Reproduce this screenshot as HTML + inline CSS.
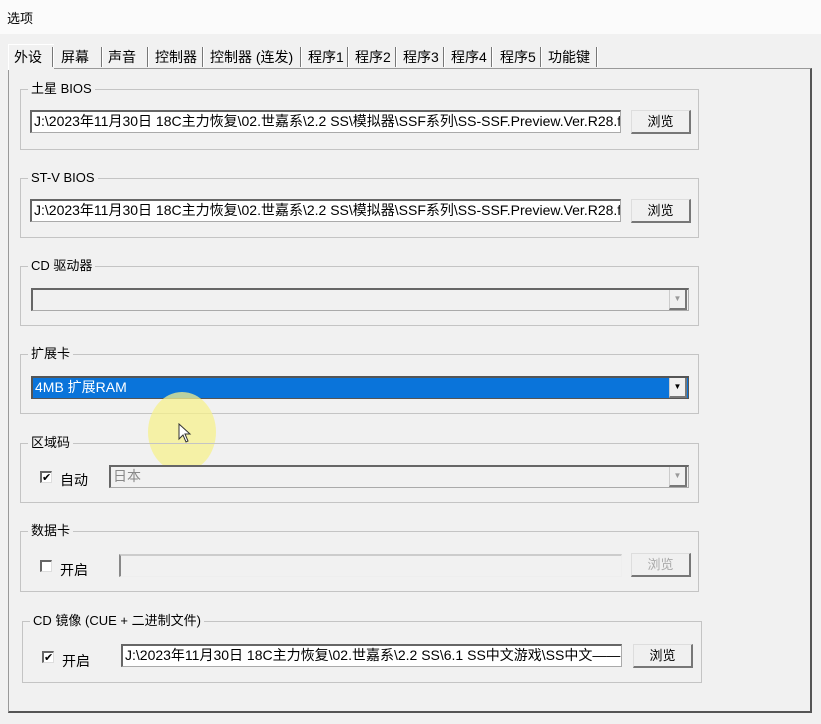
<!DOCTYPE html>
<html><head><meta charset="utf-8"><style>
*{box-sizing:border-box;margin:0;padding:0}
body{width:821px;height:724px;background:#f1f1f1;position:relative;overflow:hidden;font-family:"Liberation Sans","Noto Sans CJK SC",sans-serif;font-size:13px;color:#000}
.a{position:absolute}
.title{left:0;top:0;width:821px;height:34px;background:#fbfbfb}
.panel{left:8px;top:68px;width:804px;height:645px;border:1px solid #999;border-right:2px solid #555;border-bottom:2px solid #555;background:#f1f1f1}
.tab{top:46px;height:23px;line-height:22px;padding-left:4px;white-space:nowrap;font-size:14px}
.sep{top:47px;width:2px;height:20px;background:#777;border-right:1px solid #fff}
.g{border:1px solid #c4c4c4;border-top-color:#c4c4c4}
.gl{background:#f1f1f1;padding:0 3px;line-height:16px}
.inp{background:#fff;border:1px solid #aaa;border-top:2px solid #666;border-left:2px solid #666;line-height:19px;padding-left:2px;white-space:nowrap;overflow:hidden;font-size:14px}
.btn{border:1px solid #ddd;border-right:2px solid #777;border-bottom:2px solid #777;background:#f0f0f0;text-align:center;line-height:21px}
.cb{width:12px;height:12px;border-top:2px solid #666;border-left:2px solid #666;border-right:1px solid #ddd;border-bottom:1px solid #ddd;background:#fff;font-size:11px;line-height:10px;text-align:center}
.dd{width:18px;border-left:1px solid #ccc;border-right:2px solid #777;border-bottom:2px solid #777;background:#f0f0f0;font-size:8px;text-align:center;color:#999}
</style></head><body>
<div class="a title"></div>
<div class="a" style="left:7px;top:8px;">选项</div>
<div class="a panel"></div>
<div class="a" style="left:8px;top:44px;width:46px;height:26px;background:#f1f1f1;border-top:1px solid #fff;border-left:1px solid #fff"></div>
<div class="a tab" style="left:10px">外设</div>
<div class="a sep" style="left:52px"></div><div class="a tab" style="left:57px">屏幕</div>
<div class="a sep" style="left:101px"></div><div class="a tab" style="left:104px">声音</div>
<div class="a sep" style="left:147px"></div><div class="a tab" style="left:151px">控制器</div>
<div class="a sep" style="left:202px"></div><div class="a tab" style="left:206px">控制器 (连发)</div>
<div class="a sep" style="left:300px"></div><div class="a tab" style="left:304px">程序1</div>
<div class="a sep" style="left:347px"></div><div class="a tab" style="left:351px">程序2</div>
<div class="a sep" style="left:395px"></div><div class="a tab" style="left:399px">程序3</div>
<div class="a sep" style="left:443px"></div><div class="a tab" style="left:447px">程序4</div>
<div class="a sep" style="left:491px"></div><div class="a tab" style="left:496px">程序5</div>
<div class="a sep" style="left:540px"></div><div class="a tab" style="left:544px">功能键</div>
<div class="a sep" style="left:596px"></div>

<div class="a g" style="left:20px;top:89px;width:679px;height:61px"></div>
<div class="a gl" style="left:28px;top:81px">土星 BIOS</div>
<div class="a inp" style="left:30px;top:110px;width:591px;height:23px">J:\2023年11月30日 18C主力恢复\02.世嘉系\2.2 SS\模拟器\SSF系列\SS-SSF.Preview.Ver.R28.fi</div>
<div class="a btn" style="left:631px;top:110px;width:60px;height:24px">浏览</div>

<div class="a g" style="left:20px;top:178px;width:679px;height:60px"></div>
<div class="a gl" style="left:28px;top:170px">ST-V BIOS</div>
<div class="a inp" style="left:30px;top:199px;width:591px;height:23px">J:\2023年11月30日 18C主力恢复\02.世嘉系\2.2 SS\模拟器\SSF系列\SS-SSF.Preview.Ver.R28.fi</div>
<div class="a btn" style="left:631px;top:199px;width:60px;height:24px">浏览</div>

<div class="a g" style="left:20px;top:266px;width:679px;height:60px"></div>
<div class="a gl" style="left:28px;top:258px">CD 驱动器</div>
<div class="a inp" style="left:31px;top:288px;width:658px;height:23px;background:#f1f1f1"></div>
<div class="a dd" style="left:669px;top:290px;height:20px;line-height:18px">▼</div>

<div class="a g" style="left:20px;top:354px;width:679px;height:60px"></div>
<div class="a gl" style="left:28px;top:346px">扩展卡</div>
<div class="a inp" style="left:31px;top:376px;width:658px;height:23px;background:#0a74da;color:#fff;border-color:#555">4MB 扩展RAM</div>
<div class="a dd" style="left:669px;top:378px;height:20px;line-height:18px;color:#000">▼</div>
<div class="a" style="left:148px;top:392px;width:68px;height:80px;border-radius:50%;background:rgba(245,240,140,0.75)"></div>
<svg class="a" style="left:178px;top:423px" width="14" height="22" viewBox="0 0 14 22"><path d="M1 1 L1 16 L5 12 L8 19 L10 18 L7 11 L12 11 Z" fill="#fff" stroke="#333" stroke-width="1"/></svg>

<div class="a g" style="left:20px;top:443px;width:679px;height:60px"></div>
<div class="a gl" style="left:28px;top:435px">区域码</div>
<div class="a cb" style="left:40px;top:471px">✔</div>
<div class="a" style="left:60px;top:470px;font-size:14px">自动</div>
<div class="a inp" style="left:109px;top:465px;width:580px;height:23px;background:#f1f1f1;color:#888">日本</div>
<div class="a dd" style="left:669px;top:467px;height:20px;line-height:18px">▼</div>

<div class="a g" style="left:20px;top:531px;width:679px;height:61px"></div>
<div class="a gl" style="left:28px;top:523px">数据卡</div>
<div class="a cb" style="left:40px;top:560px"></div>
<div class="a" style="left:60px;top:560px;font-size:14px">开启</div>
<div class="a inp" style="left:119px;top:554px;width:503px;height:23px;background:#f1f1f1;border-color:#ccc #eee #eee #888"></div>
<div class="a btn" style="left:631px;top:553px;width:60px;height:24px;color:#aaa">浏览</div>

<div class="a g" style="left:22px;top:621px;width:680px;height:62px"></div>
<div class="a gl" style="left:30px;top:613px">CD 镜像 (CUE + 二进制文件)</div>
<div class="a cb" style="left:42px;top:651px">✔</div>
<div class="a" style="left:62px;top:651px;font-size:14px">开启</div>
<div class="a inp" style="left:121px;top:644px;width:501px;height:23px">J:\2023年11月30日 18C主力恢复\02.世嘉系\2.2 SS\6.1 SS中文游戏\SS中文——C</div>
<div class="a btn" style="left:633px;top:644px;width:60px;height:24px">浏览</div>
</body></html>
